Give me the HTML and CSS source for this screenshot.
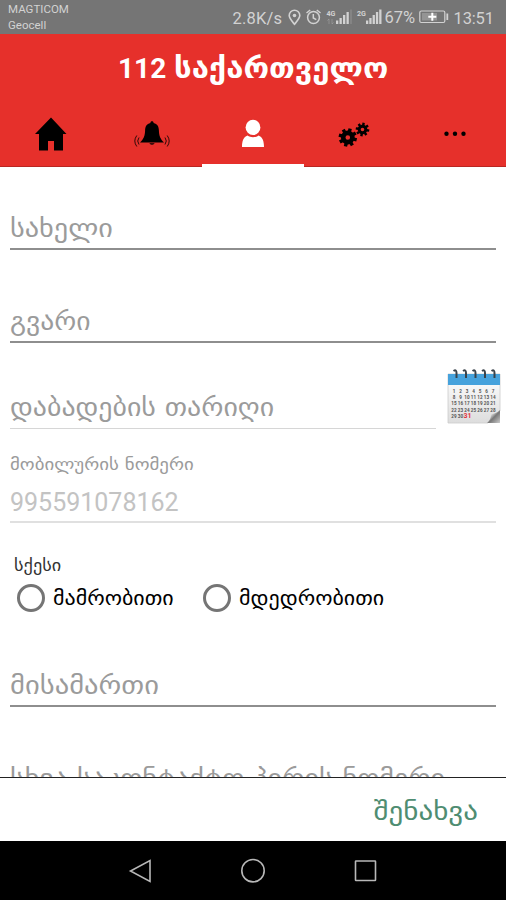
FILE: index.html
```html
<!DOCTYPE html>
<html lang="ka">
<head>
<meta charset="utf-8">
<title>112 საქართველო</title>
<link rel="stylesheet" href="styles.css">
</head>
<body>
<div class="status">
  <div class="carriers"><span class="c1">MAGTICOM</span><span class="c2">Geocell</span></div>
  <svg class="status-icons" width="281" height="34" viewBox="0 0 281 34" fill="none" stroke="#d2d2d2">
    <g class="status-text" stroke="none" fill="#d2d2d2">
      <text x="7.500" y="23.500" textLength="49.500" font-size="16.500">2.8K/s</text>
      <text x="159.500" y="22.500" textLength="30.500" font-size="16.500">67%</text>
      <text x="228.500" y="23.500" textLength="40.500" font-size="16.500">13:51</text>
      <text x="101.500" y="15.500" font-size="8" font-weight="700" textLength="9" lengthAdjust="spacingAndGlyphs">4G</text>
      <text x="132" y="15.500" font-size="8" font-weight="700" textLength="9" lengthAdjust="spacingAndGlyphs">2G</text>
      <path d="M111 20.500h2.300V24H111zM114.500 18h2.300v6h-2.300zM118 15h2.300v9H118zM121.500 12h2.300v12h-2.300z"/>
      <path d="M125.500 9.500h1V24h-1z" opacity=".35"/>
      <path d="M141 20.500h2.300V24H141zM144.300 18h2.300v6h-2.300zM147.600 15h2.300v9h-2.300zM150.900 12h2.300v12h-2.300zM154.200 9.500h2.300V24h-2.300z"/>
    </g>
    <path stroke-width="1.600" d="M69.500 24.300C66 20 64.200 18 64.200 15.500a5.300 5.300 0 0 1 10.600 0C74.800 18 73 20 69.500 24.300z"/>
    <circle cx="69.500" cy="15.500" r="1.800" fill="#d2d2d2" stroke="none"/>
    <circle cx="88.500" cy="17.500" r="5.900" stroke-width="1.500"/>
    <path stroke-width="1.500" d="M88.300 14v4l3 1.700M81.500 13l3.700-3M95.500 13l-3.700-3"/>
    <path stroke-width="1" opacity=".3" d="M104 24v-5l-1.500 1.500M107 19v5l1.500-1.500"/>
    <rect x="194.800" y="11" width="25" height="11.500" rx="1.500" stroke-width="1.200"/>
    <path d="M197 13h15v7.500h-15z" fill="#b4b4b4" opacity=".5" stroke="none"/>
    <path stroke="#fff" stroke-width="2" d="M207.300 12.700v8M203.300 16.700h8"/>
    <path stroke-width="1.800" d="M222.300 13.500v6.500"/>
  </svg>
</div>
<header class="header">
  <h1 class="title"><span>112</span><span class="title-ka">საქართველო</span></h1>
  <nav class="tabs">
    <a class="tab"><svg width="34" height="36" viewBox="0 0 34 36"><path d="M17 1.500 32.500 18H29v16.500h-9V25h-6v9.500H5V18H1z"/></svg></a>
    <a class="tab"><svg width="36" height="28" viewBox="0 0 36 28"><path d="M18 1.300c1 0 1.600.7 1.600 1.600 3.800.8 5.200 3.600 5.300 7.500.1 5.200 1.500 8.600 5.100 12H6c3.600-3.400 5-6.800 5.100-12 .1-3.900 1.500-6.700 5.300-7.500 0-.9.600-1.600 1.600-1.600z"/><path d="M15.300 23.200h5.400a2.800 2 0 0 1-5.400 0z"/><path class="wave" d="M5 17.500q-2.600 3.500 0 7M2.800 15.500q-4 5.500 0 11M31 17.500q2.600 3.500 0 7M33.200 15.500q4 5.500 0 11"/></svg></a>
    <a class="tab active"><svg width="24" height="30" viewBox="0 0 24 30"><ellipse cx="12" cy="8.400" rx="7.400" ry="7.700"/><path d="M1 28c0-6 1.500-10 5.500-11.500 3 2.300 8 2.300 11 0 4 1.500 5.500 5.500 5.500 11.500z"/></svg></a>
    <a class="tab"><svg width="34" height="28" viewBox="0 0 34 28">
      <g transform="translate(10.800 17.500)"><circle r="4.600" fill="none" stroke="#000" stroke-width="4.600"/><path class="teeth" d="M0-9.200V-6M0 6v3.200M-9.200 0H-6M6 0h3.200M-6.500-6.500l2.200 2.200M4.300 4.300l2.200 2.200M-6.500 6.500l2.200-2.200M4.300-4.300l2.200-2.200" transform="rotate(15)"/></g>
      <g transform="translate(25.500 9.500)"><circle r="3.300" fill="none" stroke="#000" stroke-width="3"/><path class="teeth small" d="M0-6.800V-4M0 4v2.800M-6.800 0H-4M4 0h2.800M-4.800-4.800l1.800 1.800M3 3l1.800 1.800M-4.800 4.800l1.800-1.800M3-3l1.800-1.800" transform="rotate(10)"/></g>
    </svg></a>
    <a class="tab"><svg width="24" height="6" viewBox="0 0 24 6"><circle cx="3.500" cy="2.700" r="2.200"/><circle cx="12" cy="2.700" r="2.200"/><circle cx="20.500" cy="2.700" r="2.200"/></svg></a>
  </nav>
</header>
<main class="form">
  <div class="field name"><span class="ka w-name">სახელი</span></div>
  <div class="field surname"><span class="ka w-surname">გვარი</span></div>
  <div class="date-row">
    <div class="field birth"><span class="ka w-birth">დაბადების თარიღი</span></div>
    <svg class="calendar" width="56" height="58" viewBox="0 0 56 58">
      <defs><linearGradient id="page" x2="0" y2="1"><stop stop-color="#fff"/><stop offset="1" stop-color="#ddd"/></linearGradient><linearGradient id="curl" x2="1" y2="1"><stop offset=".3" stop-color="#eee"/><stop offset=".55" stop-color="#777"/><stop offset="1" stop-color="#ccc"/></linearGradient></defs>
      <path d="M2 6h52v37L42 55H2z" fill="url(#page)" stroke="#ccc" stroke-width=".8"/>
      <path d="M2 6h52v11H2z" fill="#46a2dc"/>
      <path d="M54 42v13H41q4-3 4-9 5 0 9-4z" fill="url(#curl)"/>
      <g fill="none" stroke="#39424a" stroke-width="2"><path d="M7.500 3q3-2 3 2v5M17 3q3-2 3 2v5M26.500 3q3-2 3 2v5M36 3q3-2 3 2v5M45.500 3q3-2 3 2v5"/></g>
      <g class="days">
        <text y="25"><tspan x="8">1</tspan><tspan x="14.500">2</tspan><tspan x="21">3</tspan><tspan x="27.500">4</tspan><tspan x="34">5</tspan><tspan x="40.500">6</tspan><tspan x="47">7</tspan></text>
        <text y="31.200"><tspan x="8">8</tspan><tspan x="14.500">9</tspan><tspan x="21">10</tspan><tspan x="27.500">11</tspan><tspan x="34">12</tspan><tspan x="40.500">13</tspan><tspan x="47">14</tspan></text>
        <text y="37.400"><tspan x="8">15</tspan><tspan x="14.500">16</tspan><tspan x="21">17</tspan><tspan x="27.500">18</tspan><tspan x="34">19</tspan><tspan x="40.500">20</tspan><tspan x="47">21</tspan></text>
        <text y="43.600"><tspan x="8">22</tspan><tspan x="14.500">23</tspan><tspan x="21">24</tspan><tspan x="27.500">25</tspan><tspan x="34">26</tspan><tspan x="40.500">27</tspan><tspan x="47">28</tspan></text>
        <text y="49.800"><tspan x="8">29</tspan><tspan x="14.500">30</tspan><tspan class="today" x="21.500">31</tspan></text>
      </g>
    </svg>
  </div>
  <div class="field phone"><span class="ka w-label">მობილურის ნომერი</span><span class="number">995591078162</span></div>
  <div class="gender">
    <div class="ka w-gender">სქესი</div>
    <div class="radios">
      <label class="option male"><i class="radio"></i><span class="ka w-male">მამრობითი</span></label>
      <label class="option"><i class="radio"></i><span class="ka w-female">მდედრობითი</span></label>
    </div>
  </div>
  <div class="field address"><span class="ka w-address">მისამართი</span></div>
  <div class="field contact"><span class="ka w-contact">სხვა საკონტაქტო პირის ნომერი</span></div>
</main>
<footer class="save"><span class="ka w-save">შენახვა</span></footer>
<div class="navbar">
  <svg width="24" height="26" viewBox="0 0 24 26"><path d="M22 2.500v21L2.500 13z"/></svg>
  <svg width="26" height="26" viewBox="0 0 26 26"><circle cx="13" cy="12.700" r="11.200"/></svg>
  <svg width="24" height="24" viewBox="0 0 24 24"><rect x="1.500" y="2" width="20" height="19.500" rx=".5"/></svg>
</div>
</body>
</html>
```
FILE: styles.css
```css
* { box-sizing: border-box; }
body { margin: 0; width: 506px; height: 900px; overflow: hidden; background: #fff; display: flex; flex-direction: column; font-family: Roboto, "DejaVu Sans", sans-serif; }
svg { display: block; flex: none; }
.status { height: 34px; flex: none; background: #757575; display: flex; justify-content: space-between; color: #d2d2d2; }
.carriers { display: flex; flex-direction: column; padding: 2px 0 0 8px; font-size: 11.5px; line-height: 15.5px; }
.status-text { font-family: Roboto, sans-serif; }
.header { height: 133px; flex: none; background: #e6302b; border-bottom: 1px solid #b92722; display: flex; flex-direction: column; }
.title { margin: 0; height: 66px; padding-left: 118px; color: #fff; font-size: 28px; line-height: 69px; white-space: nowrap; display: flex; gap: 8px; }
.title-ka { transform: scaleX(1.11); transform-origin: 0 50%; }
.tabs { flex: 1; display: flex; }
.tab { flex: 1; display: flex; align-items: center; justify-content: center; fill: #000; padding-top: 1px; }
.tab.active { fill: #fff; box-shadow: inset 0 -2px #fff, 0 1px #fff; }
.wave { fill: none; stroke: #000; stroke-width: .8; }
.teeth { stroke: #000; stroke-width: 3.4; }
.teeth.small { stroke-width: 2.4; }
.form { height: 610px; flex: none; overflow: hidden; padding: 0 10px; }
.ka { display: block; align-self: flex-start; white-space: nowrap; color: #9b9b9b; font-family: "DejaVu Sans", sans-serif; font-size: 25px; line-height: 38px; transform: scaleX(1.13); transform-origin: 0 50%; }
.field { display: flex; flex-direction: column; justify-content: flex-end; border-bottom: 2px solid #8e8e8e; }
.name { height: 83px; }
.surname { height: 93px; }
.date-row { height: 86px; display: flex; align-items: flex-end; justify-content: space-between; }
.birth { width: 426px; height: 86px; border-bottom: 1px solid #d6d6d6; }
.calendar { margin: 0 -6px 3px 0; }
.phone { height: 94px; border-bottom: 2px solid #e0e0e0; }
.number { font-size: 25px; line-height: 36px; color: #c3c3c3; }
.gender { height: 91px; padding: 33px 0 0 4px; }
.radios { display: flex; height: 42px; align-items: center; padding: 1px 0 0 3px; }
.option { display: flex; align-items: center; gap: 8px; height: 29px; }
.male { width: 186px; }
.radio { width: 28px; height: 28px; border: 3px solid #757575; border-radius: 50%; flex: none; }
.address { height: 93px; }
.contact { height: 93px; }
.ka.w-surname { transform: scaleX(1.105); }
.ka.w-birth { transform: scaleX(1.115); line-height: 40px; }
.ka.w-label { font-size: 17px; line-height: 24px; margin-bottom: 9px; transform: scaleX(1.11); }
.ka.w-gender { font-size: 16px; line-height: 20px; color: #333; width: max-content; transform: scaleX(1.14); }
.ka.w-male, .ka.w-female { font-size: 20px; line-height: 29px; padding-top: 1px; color: #000; transform: scaleX(1.1); }
.ka.w-address { transform: scaleX(1.143); }
.ka.w-contact { transform: scaleX(1.123); }
.save { height: 64px; flex: none; border-top: 1px solid #222; display: flex; justify-content: flex-end; align-items: flex-start; padding: 15px 28px 0 0; }
.ka.w-save { color: #4f8d72; transform: scaleX(1.16); transform-origin: 100% 50%; }
.navbar { height: 59px; flex: none; background: #000; display: flex; justify-content: center; align-items: center; gap: 88px; fill: none; stroke: #b8b8b8; stroke-width: 1.6; }
.days { font: 700 4.6px Roboto, sans-serif; fill: #555; text-anchor: middle; }
.today { fill: #e3343c; font-size: 7px; }
```
